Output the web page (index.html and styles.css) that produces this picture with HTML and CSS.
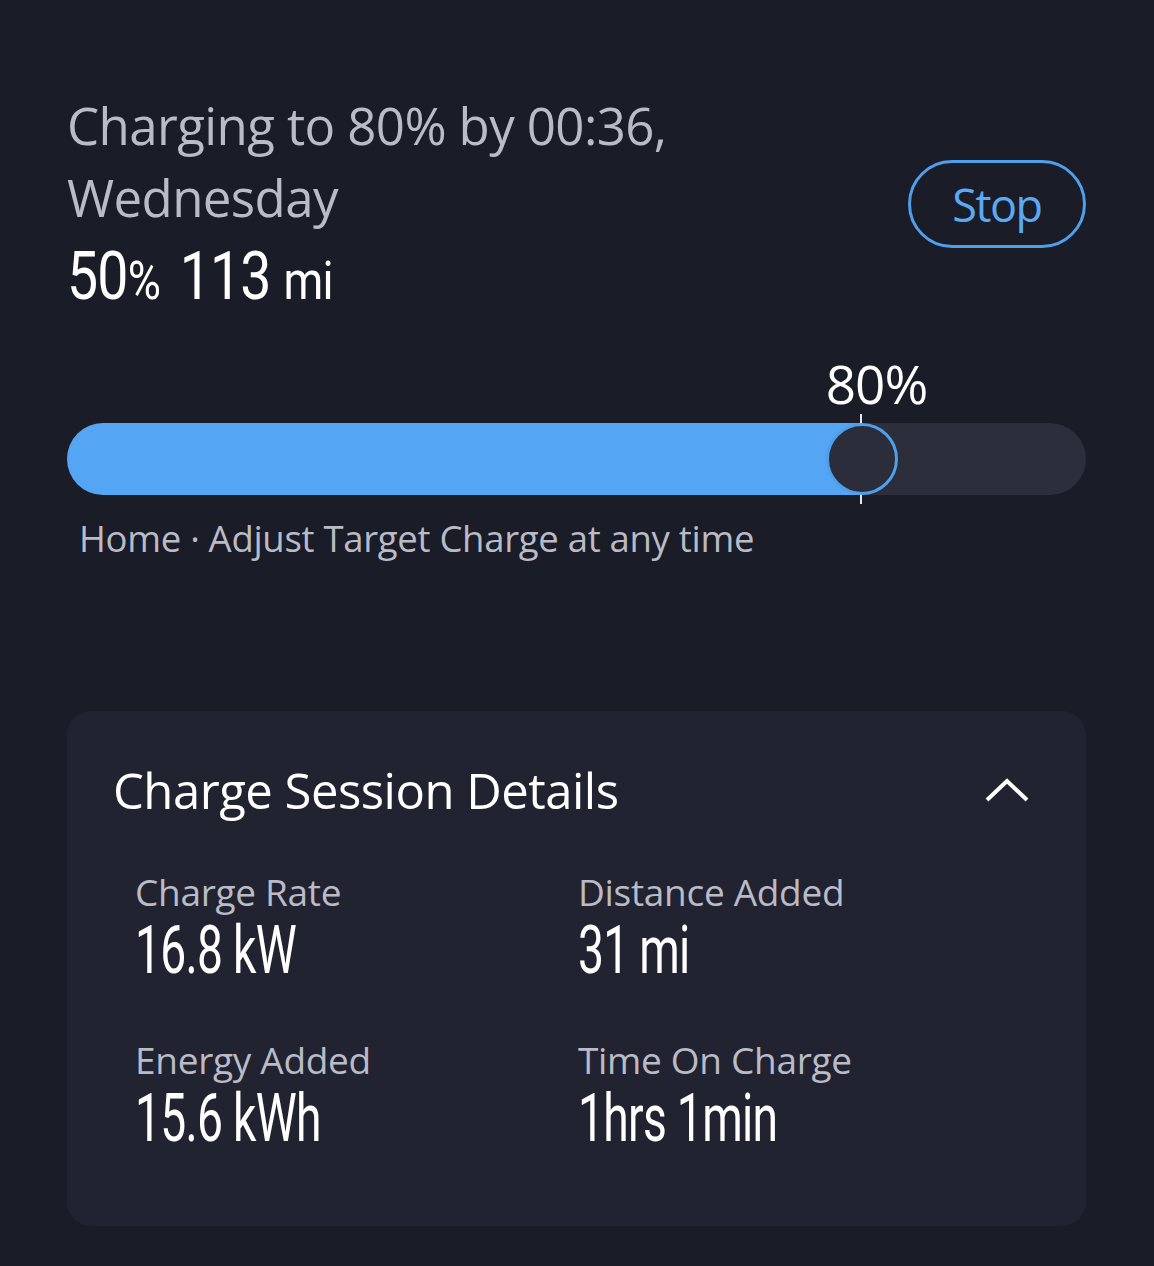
FILE: index.html
```html
<!DOCTYPE html>
<html lang="en">
<head>
    <meta charset="UTF-8">
    <meta name="viewport" content="width=device-width, initial-scale=1.0">
    <title>Charging</title>
    <link rel="stylesheet" href="styles.css">
</head>
<body>

<div class="screen">
    <div class="status">
        <div class="status-text">
            <div class="eta">Charging to 80% by 00:36,<br>Wednesday</div>
            <div class="level">
                <span class="narrow wide"><span class="big">50</span><span class="unit">%</span> <span class="big range">113</span> <span class="unit">mi</span></span>
            </div>
        </div>
        <button class="stop-btn">Stop</button>
    </div>

    <div class="target">
        <div class="target-label" style="left: 77.9%">80%</div>
        <div class="track">
            <div class="fill" style="width: 77.9%"></div>
            <div class="tick" style="left: 77.9%"></div>
            <div class="thumb" style="left: 77.9%"></div>
        </div>
        <div class="hint">Home · Adjust Target Charge at any time</div>
    </div>

    <div class="card">
        <div class="card-head">
            <h2>Charge Session Details</h2>
            <svg class="chevron" width="46" height="26" viewBox="0 0 46 26">
                <path d="M3 23 L23 4 L43 23" fill="none" stroke="#ffffff" stroke-width="4"/>
            </svg>
        </div>
        <div class="details">
            <div class="item">
                <div class="item-label">Charge Rate</div>
                <div class="item-value"><span class="narrow">16.8 kW</span></div>
            </div>
            <div class="item">
                <div class="item-label">Distance Added</div>
                <div class="item-value"><span class="narrow">31 mi</span></div>
            </div>
            <div class="item">
                <div class="item-label">Energy Added</div>
                <div class="item-value"><span class="narrow">15.6 kWh</span></div>
            </div>
            <div class="item">
                <div class="item-label">Time On Charge</div>
                <div class="item-value"><span class="narrow">1hrs 1min</span></div>
            </div>
        </div>
    </div>
</div>

</body>
</html>
```

FILE: styles.css
```css
body {
    margin: 0;
    background-color: #1a1c27;
    font-family: "Open Sans", "Noto Sans", sans-serif;
    color: #ffffff;
}
.screen {
    padding: 89px 68px 0 67px;
}
.status {
    display: flex;
    justify-content: space-between;
    align-items: center;
}
.eta {
    font-size: 51px;
    line-height: 72px;
    color: #b9bbc7;
    letter-spacing: -0.6px;
}
/* the app uses a condensed face for numbers */
.narrow {
    display: inline-block;
    transform: scaleX(0.7);
    transform-origin: left center;
    white-space: nowrap;
}
.narrow.wide {
    transform: scaleX(0.84);
}
.level {
    margin-top: 6px;
    line-height: 76px;
    font-family: Roboto, sans-serif;
    font-size: 66px;
    letter-spacing: -1px;
}
.unit {
    font-size: 54px;
}
.range {
    margin-left: 8px;
}
.stop-btn {
    width: 178px;
    height: 88px;
    background: none;
    border: 3px solid #4f9fea;
    border-radius: 44px;
    color: #5aa9f2;
    font-family: "Open Sans", sans-serif;
    font-size: 45px;
    letter-spacing: -1.5px;
    cursor: pointer;
}

/* target slider */
.target {
    position: relative;
    padding-top: 104px;
}
.target-label {
    position: absolute;
    top: 37px;
    transform: translateX(-35px);
    font-size: 53px;
    line-height: 56px;
    letter-spacing: -1px;
}
.track {
    position: relative;
    height: 72px;
    border-radius: 36px;
    background-color: #2c2e3b;
}
.fill {
    height: 100%;
    border-radius: 36px 0 0 36px;
    background-color: #55a5f5;
}
.tick {
    position: absolute;
    top: -9px;
    bottom: -9px;
    width: 2px;
    margin-left: -1px;
    background-color: #e8e8ee;
}
.thumb {
    position: absolute;
    top: 0;
    width: 66px;
    height: 66px;
    margin-left: -35px;
    border: 3px solid #4f9fea;
    border-radius: 50%;
    background-color: #2c2d3b;
}
.hint {
    margin: 20px 0 0 12px;
    font-size: 36.5px;
    line-height: 46px;
    color: #b9bbc7;
    letter-spacing: -0.3px;
}

/* session card */
.card {
    margin-top: 150px;
    padding: 47px 56px 72px 46px;
    border-radius: 24px;
    background-color: #212331;
}
.card-head {
    display: flex;
    justify-content: space-between;
    align-items: center;
}
.card-head h2 {
    margin: 0;
    font-size: 49px;
    font-weight: 400;
    line-height: 64px;
    letter-spacing: -0.5px;
}
.details {
    display: grid;
    grid-template-columns: 443px 1fr;
    row-gap: 51px;
    margin: 47px 0 0 22px;
}
.item-label {
    font-size: 37px;
    line-height: 46px;
    color: #b9bbc7;
    letter-spacing: -0.3px;
}
.item-value {
    margin-top: 1px;
    font-family: Roboto, sans-serif;
    font-size: 66px;
    line-height: 70px;
    letter-spacing: -1px;
}
```
